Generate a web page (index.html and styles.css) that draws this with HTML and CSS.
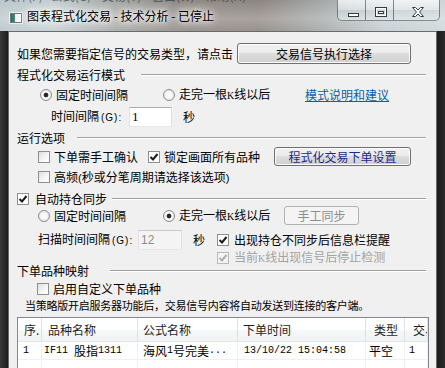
FILE: index.html
```html
<!DOCTYPE html>
<html>

<head>
  <title>图表程式化交易 - 技术分析 - 已停止</title>
  <meta charset="utf-8" />
  <link rel="stylesheet" href="styles.css">
</head>

<body>
  <div class="titlebar">
    <div class="parent-menu">文件(F)&nbsp;&nbsp;&nbsp;公式(G)&nbsp;&nbsp;&nbsp;&nbsp;交易(T)&nbsp;&nbsp;&nbsp;&nbsp;窗口(W)&nbsp;&nbsp;&nbsp;&nbsp;帮助(H)</div>
    <span class="app-icon"></span>
    <span class="title">图表程式化交易 - 技术分析 - 已停止</span>
    <div class="caps">
      <span class="cap cap-min">
        <svg width="29" height="21"><rect x="10.5" y="13.5" width="10" height="3" fill="#fff" stroke="#3a3a3a" /></svg>
      </span>
      <span class="cap cap-max">
        <svg width="28" height="21"><rect x="9.5" y="7.5" width="11" height="9" fill="none" stroke="#3a3a3a" /><rect x="10.5" y="8.5" width="9" height="7" fill="none" stroke="#fff" /><rect x="12.5" y="11.5" width="5" height="2" fill="#fff" stroke="#3a3a3a" /></svg>
      </span>
      <span class="cap cap-close">
        <svg width="46" height="21"><path d="M18.5 7.5 L21.5 7.5 L24 10 L26.5 7.5 L29.5 7.5 L25.5 12 L29.5 16.5 L26.5 16.5 L24 14 L21.5 16.5 L18.5 16.5 L22.5 12 Z" fill="#fff" stroke="#3a3a3a" /></svg>
      </span>
    </div>
  </div>

  <div class="frame">
    <div class="client">

      <div class="row row-prompt">
        <span>如果您需要指定信号的交易类型，请点击</span>
        <span class="btn btn-signal">交易信号执行选择</span>
      </div>

      <div class="group g-mode"><span>程式化交易运行模式</span><i class="rule"></i></div>
      <div class="row row-mode">
        <span class="opt w-123"><span class="radio on"></span><span>固定时间间隔</span></span>
        <span class="opt w-142"><span class="radio"></span><span>走完一根<span class="k">K</span>线以后</span></span>
        <a class="link" href="#">模式说明和建议</a>
      </div>
      <div class="row row-interval">
        <span class="field-label w-78">时间间隔<span class="acc">(G):</span></span>
        <input class="edit w-43" type="text" value="1" />
        <span class="unit">秒</span>
      </div>

      <div class="group g-run"><span>运行选项</span><i class="rule"></i></div>
      <div class="row row-check1">
        <span class="opt w-110"><span class="check"></span><span>下单需手工确认</span></span>
        <span class="opt w-126"><span class="check on"><svg width="10" height="10"><path d="M1.5 5 L4 7.5 L8.5 2" stroke="#1b1b1b" stroke-width="2" fill="none" /></svg></span><span>锁定画面所有品种</span></span>
        <span class="btn btn-order">程式化交易下单设置</span>
      </div>
      <div class="row row-check2">
        <span class="opt"><span class="check"></span><span>高频<span class="paren">(</span>秒或分笔周期请选择该选项<span class="paren">)</span></span></span>
      </div>

      <div class="group g-sync">
        <span class="opt head-opt"><span class="check on"><svg width="10" height="10"><path d="M1.5 5 L4 7.5 L8.5 2" stroke="#1b1b1b" stroke-width="2" fill="none" /></svg></span><span>自动持仓同步</span></span>
        <i class="rule"></i>
      </div>
      <div class="row row-sync">
        <span class="opt w-125"><span class="radio"></span><span>固定时间间隔</span></span>
        <span class="opt w-121"><span class="radio on"></span><span>走完一根<span class="k">K</span>线以后</span></span>
        <span class="btn btn-off">手工同步</span>
      </div>
      <div class="row row-scan">
        <span class="field-label w-100">扫描时间间隔<span class="acc">(G):</span></span>
        <input class="edit edit-off w-44" type="text" value="12" disabled />
        <span class="unit">秒</span>
        <span class="opt scan-opt"><span class="check on"><svg width="10" height="10"><path d="M1.5 5 L4 7.5 L8.5 2" stroke="#1b1b1b" stroke-width="2" fill="none" /></svg></span><span>出现持仓不同步后信息栏提醒</span></span>
      </div>
      <div class="row row-stop">
        <span class="opt opt-off"><span class="check on"><svg width="10" height="10"><path d="M1.5 5 L4 7.5 L8.5 2" stroke="#b0b0b0" stroke-width="2" fill="none" /></svg></span><span>当前<span class="k">K</span>线出现信号后停止检测</span></span>
      </div>

      <div class="group g-map"><span>下单品种映射</span><i class="rule"></i></div>
      <div class="row row-map">
        <span class="opt"><span class="check"></span><span>启用自定义下单品种</span></span>
      </div>
      <div class="row row-note">当策略版开启服务器功能后，交易信号内容将自动发送到连接的客户端。</div>

      <div class="list">
        <div class="list-head">
          <span class="col c1">序.</span>
          <span class="col c2">品种名称</span>
          <span class="col c3">公式名称</span>
          <span class="col c4">下单时间</span>
          <span class="col c5">类型</span>
          <span class="col c6">交易</span>
        </div>
        <div class="list-row">
          <span class="col c1"><span class="mono">1</span></span>
          <span class="col c2"><span class="mono">IF11 </span>股指<span class="mono">1311</span></span>
          <span class="col c3">海风<span class="mono">1</span>号完美<span class="mono">...</span></span>
          <span class="col c4"><span class="mono">13/10/22 15:04:58</span></span>
          <span class="col c5">平空</span>
          <span class="col c6"><span class="mono">1</span></span>
        </div>
        <div class="list-row">
          <span class="col c1"></span>
          <span class="col c2"></span>
          <span class="col c3"></span>
          <span class="col c4"></span>
          <span class="col c5"></span>
          <span class="col c6"></span>
        </div>
      </div>

    </div>
  </div>
</body>

</html>
```

FILE: styles.css
```css
html,
body {
  margin: 0;
  padding: 0;
}

body {
  width: 445px;
  height: 368px;
  overflow: hidden;
  display: flex;
  flex-direction: column;
  font-family: "Noto Sans CJK SC", sans-serif;
  font-size: 12px;
  line-height: 16px;
  color: #000000;
  background: #1e1e1e;
}

/* window caption, glass */
.titlebar {
  position: relative;
  height: 31px;
  flex: none;
  display: flex;
  align-items: flex-start;
  overflow: hidden;
  background:
    linear-gradient(180deg, rgba(255, 255, 255, 0) 0%, rgba(255, 255, 255, 0.25) 60%, rgba(255, 255, 255, 0.1) 100%),
    linear-gradient(90deg, #b9c6ca 0%, #c4cfd2 12%, #a9adab 24%, #8f8984 40%, #8c8580 58%, #a2a6a5 72%, #c3ccd0 86%, #ccd5d8 100%);
}

.parent-menu {
  position: absolute;
  top: -12px;
  left: 4px;
  font-size: 12px;
  color: #2b2b2b;
  white-space: nowrap;
  opacity: 0.6;
}

.app-icon {
  width: 10px;
  height: 8px;
  margin: 13px 0 0 10px;
  border: 1px solid #6f7a7c;
  background: linear-gradient(90deg, #2f6a60 0%, #3f8a79 35%, #e9efef 36%, #ffffff 100%);
  box-shadow: 0 0 0 1px rgba(255, 255, 255, 0.6);
}

.title {
  margin: 8px 0 0 5px;
  white-space: nowrap;
  color: #000000;
  text-shadow: 0 0 4px #ffffff, 0 0 8px #ffffff, 0 0 12px rgba(255, 255, 255, 0.9);
}

.caps {
  display: flex;
  margin-left: auto;
  margin-right: 5px;
  height: 21px;
}

.cap {
  display: block;
  height: 21px;
  box-sizing: border-box;
  border: 1px solid rgba(50, 50, 50, 0.55);
  border-top: none;
  border-left: none;
  background: linear-gradient(180deg, rgba(255, 255, 255, 0.75) 0%, rgba(232, 238, 240, 0.65) 50%, rgba(205, 214, 218, 0.6) 51%, rgba(225, 232, 235, 0.7) 100%);
}

.cap svg {
  display: block;
}

.cap-min {
  width: 29px;
  border-left: 1px solid rgba(50, 50, 50, 0.55);
  border-bottom-left-radius: 5px;
}

.cap-max {
  width: 28px;
}

.cap-close {
  width: 46px;
  border-bottom-right-radius: 5px;
}

/* window body */
.frame {
  flex: 1;
  min-height: 0;
  display: flex;
  padding: 0 8px;
  background: linear-gradient(90deg, #3a3a3a 0px, #1b1b1b 8px, #1b1b1b 437px, #2c2c2c 445px);
}

.client {
  flex: 1;
  display: flex;
  flex-direction: column;
  box-sizing: border-box;
  padding: 0 10px 0 8px;
  border: 1px solid #6b6b6b;
  border-bottom: none;
  background: #f0f0f0;
  overflow: hidden;
}

.row {
  display: flex;
  align-items: center;
  flex: none;
  white-space: nowrap;
}

.row-prompt {
  height: 21px;
  margin-top: 11px;
}

.row-mode {
  height: 16px;
  margin-top: 4px;
  padding-left: 23px;
}

.row-interval {
  height: 20px;
  margin-top: 4px;
  padding-left: 34px;
}

.row-check1 {
  height: 19px;
  margin-top: 1px;
  padding-left: 21px;
}

.row-check2 {
  height: 16px;
  margin-top: 3px;
  padding-left: 21px;
}

.row-sync {
  height: 19px;
  padding-left: 21px;
}

.row-scan {
  height: 20px;
  margin-top: 5px;
  padding-left: 21px;
}

.row-stop {
  height: 14px;
  margin-top: 1px;
  padding-left: 200px;
}

.row-map {
  height: 16px;
  margin-top: 4px;
  padding-left: 20px;
}

.row-note {
  height: 15px;
  padding-left: 8px;
  font-size: 11px;
  letter-spacing: -0.25px;
}

/* group headings with etched line */
.group {
  display: flex;
  align-items: center;
  flex: none;
  white-space: nowrap;
}

.rule {
  flex: 1;
  height: 0;
  border-top: 1px solid #a0a0a0;
  border-bottom: 1px solid #ffffff;
}

.g-mode {
  height: 16px;
  margin-top: 3px;
}

.g-mode .rule {
  margin-left: 16px;
}

.g-run {
  height: 16px;
  margin-top: 3px;
}

.g-run .rule {
  margin-left: 12px;
}

.g-sync {
  height: 15px;
  margin-top: 6px;
}

.g-sync .rule {
  margin-left: 5px;
}

.g-map {
  height: 12px;
}

.g-map .rule {
  margin-left: 21px;
}

/* options */
.opt {
  display: flex;
  align-items: center;
  gap: 4px;
  white-space: nowrap;
}

.head-opt {
  gap: 6px;
}

.scan-opt {
  margin-left: 12px;
  gap: 5px;
}

.opt-off {
  color: #a3a3a3;
  gap: 5px;
}

.k {
  font-family: "Liberation Serif", serif;
  font-size: 10px;
}

.paren {
  font-family: "Liberation Sans", sans-serif;
  font-size: 11px;
}

.w-78 { width: 78px; }
.w-100 { width: 100px; }
.w-110 { width: 110px; }
.w-121 { width: 121px; }
.w-123 { width: 123px; }
.w-125 { width: 125px; }
.w-126 { width: 126px; }
.w-142 { width: 142px; }
.w-43 { width: 43px; }
.w-44 { width: 44px; }

.radio {
  width: 12px;
  height: 12px;
  box-sizing: border-box;
  border-radius: 50%;
  border: 1px solid #8b8b8b;
  background: radial-gradient(circle at 50% 50%, #ffffff 0, #f3f3f3 50%, #d9d9d9 100%);
  flex: none;
}

.radio.on {
  background: radial-gradient(circle at 50% 50%, #1a1a1a 0, #333333 2px, #ffffff 2.8px, #f3f3f3 60%, #d9d9d9 100%);
}

.check {
  display: flex;
  align-items: center;
  justify-content: center;
  width: 12px;
  height: 12px;
  box-sizing: border-box;
  border: 1px solid #8e8f8f;
  background: linear-gradient(135deg, #dcdcdc 0%, #f4f4f4 50%, #ffffff 100%);
  flex: none;
}

.check.on {
  background: #ffffff;
}

.opt-off .check {
  border-color: #b8b8b8;
  background: #f4f4f4;
}

.check svg {
  display: block;
}

.field-label {
  display: block;
}

.acc {
  font-family: "Liberation Sans", sans-serif;
  font-size: 10px;
  letter-spacing: 1px;
  margin-left: 2px;
}

.unit {
  margin-left: 11px;
}

.edit {
  height: 20px;
  box-sizing: border-box;
  margin: 0;
  padding: 0 2px;
  border: 1px solid;
  border-color: #abadb3 #dbdfe6 #e3e9ef #e2e3ea;
  background: #ffffff;
  font-family: "Liberation Serif", serif;
  font-size: 13px;
  color: #000000;
  outline: none;
}

.edit-off {
  background: #f4f4f4;
  border-color: #c6c8cc #e0e2e6 #e6e8ec #e0e2e6;
  color: #8d8d8d;
  font-family: "Liberation Sans", sans-serif;
  font-size: 12px;
}

.link {
  color: #0c5ea8;
  text-decoration: underline;
}

/* win7 push buttons */
.btn {
  display: flex;
  align-items: center;
  justify-content: center;
  box-sizing: border-box;
  border: 1px solid #707070;
  border-radius: 3px;
  background: linear-gradient(180deg, #f2f2f2 0%, #ebebeb 49%, #dddddd 50%, #cfcfcf 100%);
  box-shadow: inset 0 0 0 1px #fbfbfb;
  white-space: nowrap;
}

.btn-signal {
  width: 174px;
  height: 21px;
  margin-left: 4px;
}

.btn-order {
  width: 137px;
  height: 19px;
  color: #1c2a8c;
}

.btn-off {
  width: 75px;
  height: 19px;
  border-color: #adb2b5;
  background: #f4f4f4;
  box-shadow: none;
  color: #8d8d8d;
}

/* list view */
.list {
  flex: none;
  height: 51px;
  overflow: hidden;
  box-sizing: border-box;
  margin: 5px -3px 0 0;
  border: 1px solid #828790;
  border-bottom: none;
  background: #ffffff;
}

.list-head {
  display: flex;
  height: 23px;
  border-bottom: 1px solid #e5e5e5;
  background: linear-gradient(180deg, #ffffff 0%, #ffffff 50%, #f7f8fa 51%, #f1f2f4 100%);
}

.list-head .col {
  border-right: 1px solid #dde2e8;
  color: #1e1e1e;
}

.list-row {
  display: flex;
  height: 17px;
  border-bottom: 1px solid #f0f0f0;
}

.list-row .col {
  border-right: 1px solid #f0f0f0;
}

.col {
  display: flex;
  align-items: center;
  box-sizing: border-box;
  white-space: nowrap;
  overflow: hidden;
  flex: none;
}

.mono {
  font-family: "Liberation Mono", monospace;
  font-size: 10px;
  white-space: pre;
}

.c1 { width: 24px; padding-left: 6px; }
.c2 { width: 96px; padding-left: 6px; }
.c3 { width: 100px; padding-left: 5px; }
.c4 { width: 128px; padding-left: 5px; }
.c5 { width: 39px; padding-left: 8px; }
.c6 { flex: 1; padding-left: 8px; border-right: none; }

.list-row .c1 { padding-left: 5px; }
.list-row .c2 { padding-left: 2px; }
.list-row .c3 { padding-left: 5px; }
.list-row .c4 { padding-left: 6px; }
.list-row .c5 { padding-left: 3px; }
.list-row .c6 { padding-left: 4px; }
```
